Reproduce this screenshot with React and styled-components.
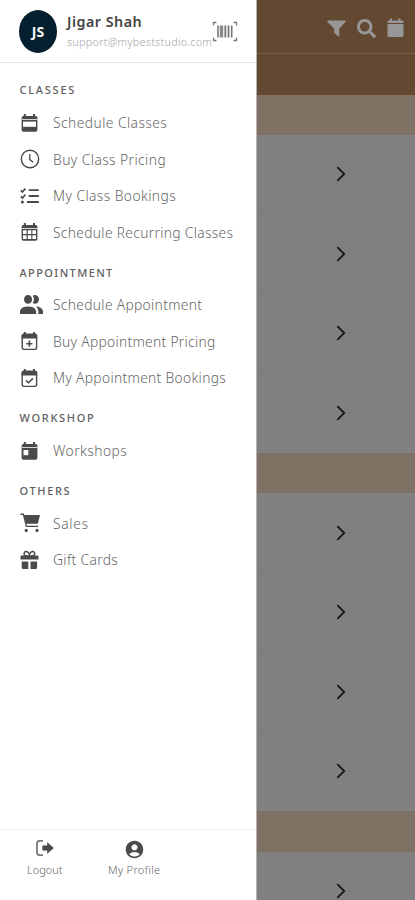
import React from "react";
import styled, { createGlobalStyle } from "styled-components";
import { FaSearch } from "react-icons/fa";
import { MdAccountCircle } from "react-icons/md";

const GlobalStyle = createGlobalStyle`
  * {
    box-sizing: border-box;
  }
  body {
    margin: 0;
    overflow: hidden;
    font-family: "Noto Sans", "Open Sans", sans-serif;
  }
`;

const Screen = styled.div`
  position: relative;
  width: 415px;
  height: 900px;
  overflow: hidden;
`;

const Page = styled.div`
  height: 100%;
  display: flex;
  flex-direction: column;
  background: #808080;
`;

const TopBar = styled.div`
  flex: none;
  height: 54px;
  padding: 3px 11px 0 0;
  display: flex;
  justify-content: flex-end;
  align-items: center;
  gap: 11px;
  color: #989797;
  background: #634932;
  border-bottom: 1px solid #755d4b;
`;

const SubBar = styled.div`
  flex: none;
  height: 41px;
  background: #634932;
`;

const DayBand = styled.div`
  flex: none;
  height: ${props => props.h || 40.5}px;
  background: #7f7265;
`;

const ClassRow = styled.div`
  flex: none;
  height: 79.5px;
  padding: 1px 67px 0 0;
  display: flex;
  justify-content: flex-end;
  align-items: center;
  border-bottom: 1px solid ${props => (props.last ? "transparent" : "#7b7b7b")};
`;

const Drawer = styled.div`
  position: absolute;
  top: 0;
  left: 0;
  width: 257px;
  height: 100%;
  display: flex;
  flex-direction: column;
  background: #fff;
  border-right: 1px solid #b5b3b1;
`;

const Profile = styled.div`
  flex: none;
  height: 63px;
  padding: 0 18px 0 19px;
  display: flex;
  align-items: center;
  border-bottom: 1px solid #e6e8e8;
`;

const Avatar = styled.div`
  flex: none;
  width: 38px;
  height: 43px;
  border-radius: 50%;
  display: flex;
  justify-content: center;
  align-items: center;
  color: #f4f6f8;
  background: #04202f;
  font-size: 14px;
  font-weight: 700;
`;

const UserInfo = styled.div`
  flex: 1;
  min-width: 0;
  height: 43px;
  padding-left: 10px;
  white-space: nowrap;
`;

const Name = styled.div`
  font-size: 14.3px;
  line-height: 24px;
  font-weight: 600;
  letter-spacing: 0.5px;
  color: #444;
`;

const Email = styled.div`
  font-size: 10.8px;
  line-height: 16px;
  font-weight: 300;
  letter-spacing: 0.28px;
  color: #a5a5a5;
`;

const Menu = styled.div`
  flex: 1;
  padding: 13.4px 0 0 19.5px;
`;

const Group = styled.div`
  margin-bottom: 8.2px;
`;

const GroupTitle = styled.div`
  height: 28px;
  line-height: 28px;
  font-size: 11px;
  font-weight: 500;
  letter-spacing: ${props => props.spacing}px;
  color: #606060;
`;

const Item = styled.div`
  height: 36.5px;
  display: flex;
  align-items: center;
  color: #4a4a4a;
`;

const IconBox = styled.div`
  width: 33.5px;
  display: flex;
  align-items: center;
`;

const Label = styled.span`
  font-size: 13.8px;
  font-weight: 300;
  letter-spacing: ${props => props.spacing}px;
  white-space: nowrap;
  color: #666;
`;

const Footer = styled.div`
  flex: none;
  height: 71px;
  padding-top: 9px;
  display: flex;
  border-top: 1px solid #eee;
`;

const FooterItem = styled.div`
  width: 89.5px;
  height: 39px;
  display: flex;
  flex-direction: column;
  align-items: center;
  justify-content: space-between;
  font-size: 11px;
  line-height: 17px;
  font-weight: 300;
  letter-spacing: ${props => props.spacing || 0}px;
  color: #666;

  svg {
    color: #4a4a4a;
  }
`;

const CalendarIcon = ({ type }) => (
  <svg width="19" height="20" viewBox="0 0 19 20" fill="currentColor">
    {type === "plus" || type === "check" ? (
      <>
        <rect x="2.2" y="3.2" width="14.4" height="15.2" rx="1.8" fill="none" stroke="currentColor" strokeWidth="1.4" />
        <path d="M1.6 5q0-2 2-2h11.6q2 0 2 2v2.4H1.6z" />
      </>
    ) : (
      <rect x="1.6" y="3" width="15.8" height="15.8" rx="1.8" />
    )}
    <path d="M3.8 1h2v3h-2zM13 1h2v3h-2z" />
    {type !== "plus" && type !== "check" && <path d="M1.6 6.1h15.8v.9H1.6z" fill="#fff" opacity=".85" />}
    {type === "band" && <path d="M3 8.6h13v5.2H3z" fill="#fff" />}
    {type === "event" && <path d="M3.5 9h4.8v5.2H3.5z" fill="#fff" />}
    {type === "grid" && (
      <path
        d="M3 8.3h3.6v3.8H3zM7.8 8.3h3.5v3.8H7.8zM12.4 8.3H16v3.8h-3.6zM3 13.3h3.6v3.8H3zM7.8 13.3h3.5v3.8H7.8zM12.4 13.3H16v3.8h-3.6z"
        fill="#fff"
      />
    )}
    {type === "plus" && <path d="M9.4 9.6v6.2M6.3 12.7h6.2" stroke="currentColor" strokeWidth="1.6" />}
    {type === "check" && <path d="M5.9 12.4l2.5 2.3 4.6-4.3" fill="none" stroke="currentColor" strokeWidth="1.5" />}
  </svg>
);

const ClockIcon = () => (
  <svg width="20" height="20" viewBox="0 0 20 20" fill="none" stroke="currentColor">
    <circle cx="10" cy="10" r="8.7" strokeWidth="1.4" />
    <path d="M9.8 5v5.6l3.4 2.6" strokeWidth="1.3" />
  </svg>
);

const TasksIcon = () => (
  <svg width="20" height="18" viewBox="0 0 20 18" fill="none" stroke="currentColor">
    <path d="M.8 3.4l1.6 1.6 3-3.4M.8 9.4l1.6 1.6 3-3.4" strokeWidth="1.6" />
    <path d="M8.8 3.2h10M8.8 9h10M7 15h11.8" strokeWidth="1.8" />
    <circle cx="2.4" cy="15" r="1.5" fill="currentColor" stroke="none" />
  </svg>
);

const PeopleIcon = () => (
  <svg width="23" height="19" viewBox="2 4 20 15" preserveAspectRatio="none" fill="currentColor">
    <path d="M16 17v2H2v-2s0-4 7-4 7 4 7 4M12.5 7.5A3.5 3.5 0 1 0 9 11a3.5 3.5 0 0 0 3.5-3.5M15.94 13A5.32 5.32 0 0 1 18 17v2h4v-2s0-3.63-6.06-4M15 4a3.39 3.39 0 0 0-1.93.59 5 5 0 0 1 0 5.82A3.39 3.39 0 0 0 15 11a3.5 3.5 0 0 0 0-7z" />
  </svg>
);

const CartIcon = () => (
  <svg width="21" height="20" viewBox="0 0 21 20" fill="currentColor">
    <path d="M4 2h16l-2.2 8.8H6z" />
    <path d="M.4 1.2h3l3 12.2h11.8" fill="none" stroke="currentColor" strokeWidth="1.4" />
    <circle cx="6.2" cy="17.4" r="1.6" />
    <circle cx="17" cy="17.4" r="1.6" />
  </svg>
);

const GiftIcon = () => (
  <svg width="20" height="20" viewBox="0 0 20 20" fill="currentColor">
    <path d="M9.4 6.2C5 6.2 3.7 5 4.1 3.3 4.7.8 8.1.9 9.4 4.4 10.7.9 14.1.8 14.7 3.3c.4 1.7-.9 2.9-5.3 2.9z" fill="none" stroke="currentColor" strokeWidth="1.5" />
    <path d="M1.5 5.6h16q1 0 1 1v2.9H.5V6.6q0-1 1-1zM1.7 11.4h6.6v7.7H3.1q-1.4 0-1.4-1.4zM10.5 11.4h6.6v6.3q0 1.4-1.4 1.4h-5.2z" />
  </svg>
);

const BarcodeIcon = () => (
  <svg width="26" height="21" viewBox="0 0 26 21" fill="none" stroke="#777">
    <path d="M1.5 4.5V1.5h3M21.5 1.5h3v3M24.5 16.5v3h-3M4.5 19.5h-3v-3" strokeWidth="1.3" />
    <path d="M6 4.5v12M19.7 4.5v12" strokeWidth="1.6" />
    <path d="M9.5 4.5v12" strokeWidth="3.4" stroke="#888" />
    <path d="M13.3 4.5v12M16.5 4.5v12" strokeWidth="1.8" />
  </svg>
);

const LogoutIcon = () => (
  <svg width="20" height="18" viewBox="0 0 20 18" fill="currentColor">
    <path d="M8 1.8H4.6Q2 1.8 2 4.4v9.2q0 2.6 2.6 2.6H8" fill="none" stroke="currentColor" strokeWidth="1.8" opacity=".75" />
    <path d="M7.4 6.6h4.8V3.2L18.9 9l-6.7 5.8v-3.4H7.4z" />
  </svg>
);

const FilterIcon = () => (
  <svg width="19" height="17" viewBox="0 0 19 17" fill="currentColor">
    <path d="M.8.6h17.4q.8.5.3 1.3L12.3 8.6v7.2q-.3.8-1 .4L7.2 13V8.6L.5 1.9Q0 1.1.8.6z" />
  </svg>
);

const CalendarToday = () => (
  <svg width="17" height="20" viewBox="0 0 17 20" fill="currentColor">
    <path d="M3 .5h2v2h6.5v-2h2v2h1.7q1.3 0 1.3 1.3V5H.5V3.8Q.5 2.5 1.8 2.5H3zM.5 6h16v11.5q0 1.5-1.5 1.5H2Q.5 19 .5 17.5z" />
  </svg>
);

const Chevron = () => (
  <svg width="14" height="18" viewBox="0 0 14 18" fill="none" stroke="#181818" strokeWidth="1.8">
    <path d="M3.3 2.2L10.2 9l-6.9 6.8" />
  </svg>
);

const groups = [
  {
    title: "CLASSES",
    spacing: 1.75,
    items: [
      { label: "Schedule Classes", spacing: 0.45, icon: <CalendarIcon type="band" /> },
      { label: "Buy Class Pricing", spacing: 0.43, icon: <ClockIcon /> },
      { label: "My Class Bookings", spacing: 0.43, icon: <TasksIcon /> },
      { label: "Schedule Recurring Classes", spacing: 0.32, icon: <CalendarIcon type="grid" /> }
    ]
  },
  {
    title: "APPOINTMENT",
    spacing: 1.4,
    items: [
      { label: "Schedule Appointment", spacing: 0.32, icon: <PeopleIcon /> },
      { label: "Buy Appointment Pricing", spacing: 0.3, icon: <CalendarIcon type="plus" /> },
      { label: "My Appointment Bookings", spacing: 0.32, icon: <CalendarIcon type="check" /> }
    ]
  },
  {
    title: "WORKSHOP",
    spacing: 1.7,
    items: [{ label: "Workshops", spacing: 0.45, icon: <CalendarIcon type="event" /> }]
  },
  {
    title: "OTHERS",
    spacing: 1.65,
    items: [
      { label: "Sales", spacing: 0.7, icon: <CartIcon /> },
      { label: "Gift Cards", spacing: 0.35, icon: <GiftIcon /> }
    ]
  }
];

const Rows = ({ count }) =>
  Array.from({ length: count }, (_, i) => (
    <ClassRow key={i} last={i === count - 1 ? 1 : undefined}>
      <Chevron />
    </ClassRow>
  ));

const App = () => (
  <>
    <GlobalStyle />
    <Screen>
      <Page>
        <TopBar>
          <FilterIcon />
          <FaSearch size={19} />
          <CalendarToday />
        </TopBar>
        <SubBar />
        <DayBand h={39.5} />
        <Rows count={4} />
        <DayBand />
        <Rows count={4} />
        <DayBand />
        <Rows count={1} />
      </Page>
      <Drawer>
        <Profile>
          <Avatar>JS</Avatar>
          <UserInfo>
            <Name>Jigar Shah</Name>
            <Email>support@mybeststudio.com</Email>
          </UserInfo>
          <BarcodeIcon />
        </Profile>
        <Menu>
          {groups.map(group => (
            <Group key={group.title}>
              <GroupTitle spacing={group.spacing}>{group.title}</GroupTitle>
              {group.items.map(item => (
                <Item key={item.label}>
                  <IconBox>{item.icon}</IconBox>
                  <Label spacing={item.spacing}>{item.label}</Label>
                </Item>
              ))}
            </Group>
          ))}
        </Menu>
        <Footer>
          <FooterItem>
            <LogoutIcon />
            Logout
          </FooterItem>
          <FooterItem spacing={0.3}>
            <MdAccountCircle size={21} />
            My Profile
          </FooterItem>
        </Footer>
      </Drawer>
    </Screen>
  </>
);

export default App;
